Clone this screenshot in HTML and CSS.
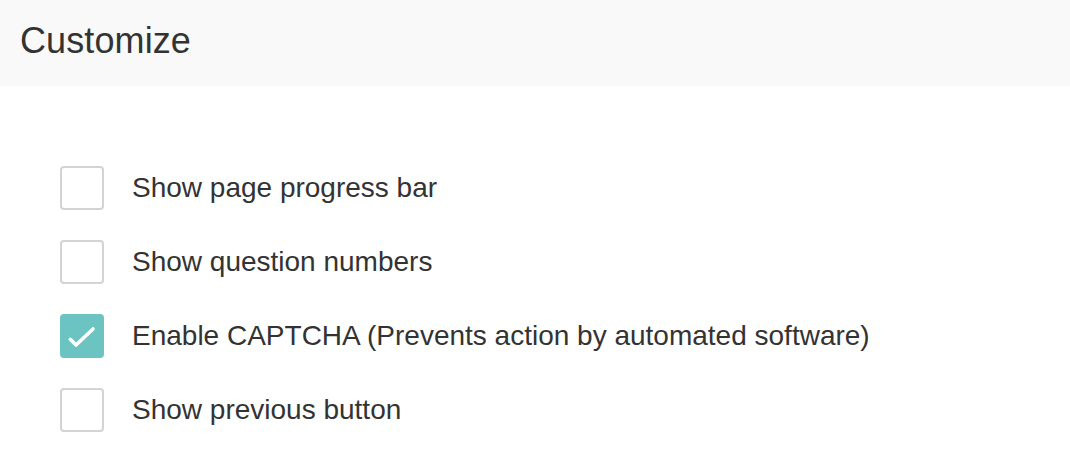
FILE: index.html
```html
<!DOCTYPE html>
<html lang="en">
<head>
<meta charset="utf-8">
<title>Customize</title>
<link rel="stylesheet" href="styles.css">
</head>
<body>
  <header class="panel-header">
    <h1 class="panel-title">Customize</h1>
  </header>
  <ul class="options">
    <li class="option">
      <span class="box"></span>
      <span class="label">Show page progress bar</span>
    </li>
    <li class="option">
      <span class="box"></span>
      <span class="label">Show question numbers</span>
    </li>
    <li class="option">
      <span class="box box-checked">
        <svg class="check" viewBox="0 0 44 44" width="44" height="44" aria-hidden="true">
          <path d="M10.3 25.3 L16 31 L33 15" fill="none" stroke="#fff" stroke-width="3.6" stroke-linecap="round" stroke-linejoin="round"/>
        </svg>
      </span>
      <span class="label">Enable CAPTCHA (Prevents action by automated software)</span>
    </li>
    <li class="option">
      <span class="box"></span>
      <span class="label">Show previous button</span>
    </li>
  </ul>
</body>
</html>
```
FILE: styles.css
```css
html, body {
  margin: 0;
  padding: 0;
  background: #ffffff;
}

body {
  font-family: "Liberation Sans", Arial, Helvetica, sans-serif;
  color: #333333;
}

.panel-header {
  height: 86px;
  box-sizing: border-box;
  background: #f9f9f9;
  display: flex;
  align-items: center;
  padding: 0 0 5px 20px;
}

.panel-title {
  margin: 0;
  font-size: 36px;
  font-weight: 400;
  color: #333333;
  letter-spacing: 0.1px;
}

.options {
  list-style: none;
  margin: 0;
  padding: 80px 0 0 60px;
  display: flex;
  flex-direction: column;
  gap: 30px;
}

.option {
  display: flex;
  align-items: center;
  gap: 28px;
  height: 44px;
}

.box {
  width: 44px;
  height: 44px;
  box-sizing: border-box;
  border: 2px solid #d3d3d3;
  border-radius: 4px;
  background: #ffffff;
  flex: none;
  position: relative;
}

.box-checked {
  background: #6cc4c2;
  border-color: #6cc4c2;
}

.check {
  position: absolute;
  left: -2px;
  top: -2px;
}

.label {
  font-size: 28px;
  line-height: 32px;
  color: #333333;
}
```
